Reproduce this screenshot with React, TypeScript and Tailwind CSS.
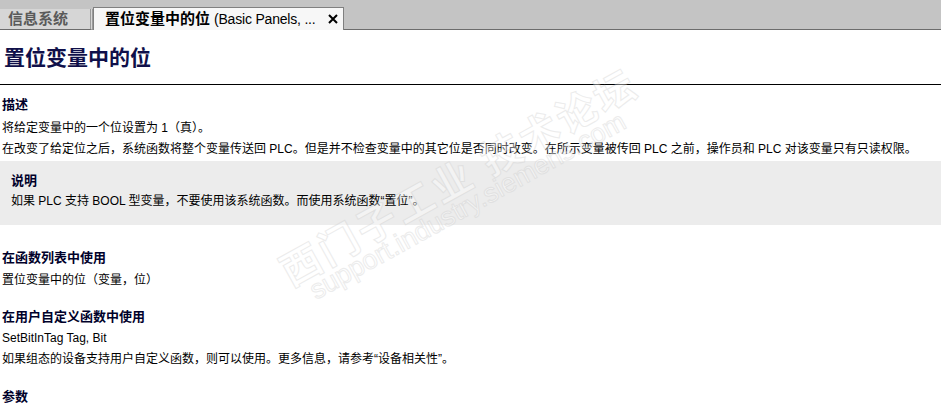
import React from "react";

const FONT = { fontFamily: '"Liberation Sans", "Noto Sans CJK SC", sans-serif' };

function Heading({ children, className = "" }: { children: React.ReactNode; className?: string }) {
  return <div className={`text-[13px] font-bold leading-[21px] text-[#00002a] ${className}`}>{children}</div>;
}

function Line({ children, className = "" }: { children: React.ReactNode; className?: string }) {
  return <div className={`text-[12px] leading-[21px] text-black ${className}`}>{children}</div>;
}

export default function App() {
  return (
    <div className="relative h-[403px] w-[941px] overflow-hidden bg-white" style={FONT}>
      {/* Tab bar */}
      <div className="flex h-[30px] items-end bg-[#c4c4c4]">
        <div className="flex h-[21px] w-[93px] shrink-0 items-center whitespace-nowrap border-b border-r-[3px] border-double border-b-[#6c6c6c] border-r-[#9a9a9a] bg-[#d6d6d6] pl-[8px] text-[15px] font-bold text-[#5a5a5a]">
          信息系统
        </div>
        <div className="flex h-[23px] w-[251px] shrink-0 items-center whitespace-nowrap border border-b-0 border-[#808080] bg-[#f7f7f7] pl-[11px] pr-[5px] text-[15px] text-black">
          <span className="shrink-0 font-bold">置位变量中的位</span>
          <span className="ml-[4px] shrink-0 text-[14px] tracking-[-0.2px]">(Basic Panels, ...</span>
          <svg className="ml-auto shrink-0" width="10" height="10" viewBox="0 0 10 10">
            <path d="M1 1 L9 9 M9 1 L1 9" stroke="#000" strokeWidth="2" />
          </svg>
        </div>
        <div className="h-full flex-1 border-b border-[#6c6c6c]" />
      </div>

      {/* Title */}
      <div className="pl-[4px] pt-[14px] text-[21px] font-bold leading-[28px] text-[#10104a]">置位变量中的位</div>
      <div className="mt-[12px] h-px bg-black" />

      {/* Content */}
      <div className="pl-[2px]">
        <Heading className="mt-[9px] mb-[3px]">描述</Heading>
        <Line>将给定变量中的一个位设置为 1（真）。</Line>
        <Line>在改变了给定位之后，系统函数将整个变量传送回 PLC。但是并不检查变量中的其它位是否同时改变。在所示变量被传回 PLC 之前，操作员和 PLC 对该变量只有只读权限。</Line>
      </div>

      <div className="mt-[1px] bg-[#ececec] pb-[13px] pl-[11px] pt-[9px]">
        <Heading>说明</Heading>
        <Line>如果 PLC 支持 BOOL 型变量，不要使用该系统函数。而使用系统函数“置位”。</Line>
      </div>

      <div className="pl-[2px]">
        <Heading className="mt-[22px] mb-[2px]">在函数列表中使用</Heading>
        <Line>置位变量中的位（变量，位）</Line>
        <Heading className="mt-[15px] mb-px">在用户自定义函数中使用</Heading>
        <Line>SetBitInTag Tag, Bit</Line>
        <Line>如果组态的设备支持用户自定义函数，则可以使用。更多信息，请参考“设备相关性”。</Line>
        <Heading className="mt-[16px]">参数</Heading>
      </div>

      {/* Watermark overlay */}
      <div className="pointer-events-none absolute left-[300px] top-[263px] h-0 w-0 origin-top-left rotate-[-29deg] opacity-40">
        <div
          className="absolute left-[-20px] top-[-20px] whitespace-nowrap text-[40px] font-bold leading-none tracking-[3px] text-white [-webkit-text-stroke:1px_#d0d0d0]"
          style={{ fontFamily: '"Noto Sans CJK SC", sans-serif' }}
        >
          西门子工业<span className="ml-[14px]">技术论坛</span>
        </div>
        <div className="absolute left-[-4px] top-[18px] whitespace-nowrap text-[27px] leading-none text-white [-webkit-text-stroke:1px_#d0d0d0]">
          support.industry.siemens.com
        </div>
      </div>
    </div>
  );
}
